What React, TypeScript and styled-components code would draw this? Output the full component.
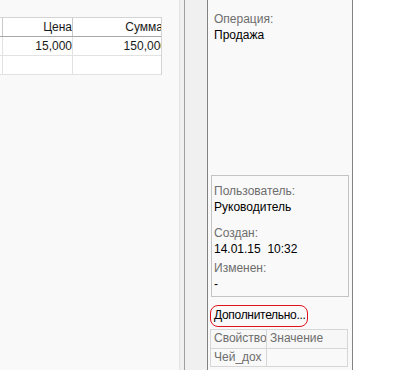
import React from "react"
import styled, {createGlobalStyle} from 'styled-components'

const Global = createGlobalStyle`
  html, body {
    margin: 0;
    padding: 0;
    background: #ffffff;
  }
  body {
    font-family: "Liberation Sans", Arial, sans-serif;
    font-size: 12px;
  }
`

const Window = styled.div`
  width: 399px;
  height: 370px;
  display: flex;
  flex-direction: row;
  overflow: hidden;
  background: #ffffff;
`
const LeftPane = styled.div`
  width: 179px;
  flex-shrink: 0;
  background: #f9f9f9;
  padding-top: 17px;
  box-sizing: border-box;
`
const Grid = styled.div`
  width: 162px;
  background: #ffffff;
  border-top: 1px solid #d4d4d4;
  border-right: 1px solid #d4d4d4;
  box-sizing: border-box;
`
const GridRow = styled.div<{header?: boolean}>`
  display: grid;
  grid-template-columns: 3px 70px 88px;
  height: 19px;
  border-bottom: 1px solid ${({header}) => header ? '#a8a8a8' : '#e2e2e2'};
  box-sizing: border-box;
`
const Cell = styled.div<{header?: boolean}>`
  border-right: 1px solid ${({header}) => header ? '#c8c8c8' : '#e2e2e2'};
  overflow: hidden;
  display: flex;
  justify-content: flex-start;
  align-items: center;
  color: #1a1a1a;
  white-space: nowrap;
  &:last-child {
    border-right: none;
  }
`
// колонка шире видимой области, текст обрезается как в гриде
const Clip = styled.span<{w: number}>`
  display: block;
  flex-shrink: 0;
  width: ${({w}) => w}px;
  text-align: right;
  padding-right: 1px;
  box-sizing: border-box;
`
const Splitter = styled.div`
  width: 6px;
  flex-shrink: 0;
  background: #f0f0f0;
  border-left: 1px solid #e3e3e3;
  border-right: 1px solid #a0a0a0;
  box-sizing: border-box;
`
const Gap = styled.div`
  width: 22px;
  flex-shrink: 0;
  background: #f0f0f0;
`
const Panel = styled.div`
  width: 146px;
  flex-shrink: 0;
  background: #f9f9f9;
  border-left: 1px solid #828282;
  border-right: 1px solid #828282;
  box-sizing: border-box;
  display: flex;
  flex-direction: column;
  padding: 11px 0 0 0;
`
const Label = styled.div<{mt?: number}>`
  color: #6d6d6d;
  line-height: 16px;
  margin-top: ${({mt}) => mt || 0}px;
`
const Value = styled.div`
  color: #000000;
  line-height: 16px;
`
const Section = styled.div`
  padding-left: 6px;
`
const InfoBox = styled.div`
  margin: 132px 3px 0 3px;
  height: 122px;
  border: 1px solid #c4c4c4;
  box-sizing: border-box;
  padding: 7px 0 0 2px;
`
const MoreLink = styled.span`
  display: inline-block;
  margin: 8px 0 0 2px;
  padding: 1px 1px 2px 3px;
  border: 1px solid #e0101a;
  border-radius: 8px;
  color: #000000;
  line-height: 17px;
  letter-spacing: -0.3px;
  align-self: flex-start;
`
const Props = styled.div`
  margin: 2px 4px 0 2px;
  border: 1px solid #d6d6d6;
  border-bottom: none;
`
const PropsRow = styled.div<{header?: boolean}>`
  display: grid;
  grid-template-columns: 56px 1fr;
  height: ${({header}) => header ? 18 : 17}px;
  border-bottom: 1px solid #d6d6d6;
  background: ${({header}) => header ? '#f7f7f7' : '#f9f9f9'};
`
const PropsCell = styled.div`
  color: #6d6d6d;
  line-height: 17px;
  padding-left: 3px;
  white-space: nowrap;
  overflow: hidden;
  border-right: 1px solid #d6d6d6;
  &:last-child {
    border-right: none;
  }
`
const Rest = styled.div`
  flex: 1;
  background: #ffffff;
`

export default function App() {
    return <>
        <Global/>
        <Window>
            <LeftPane>
                <Grid>
                    <GridRow header>
                        <Cell header/>
                        <Cell header><Clip w={70}>Цена</Clip></Cell>
                        <Cell header><Clip w={91}>Сумма</Clip></Cell>
                    </GridRow>
                    <GridRow>
                        <Cell/>
                        <Cell><Clip w={70}>15,000</Clip></Cell>
                        <Cell><Clip w={95}>150,000</Clip></Cell>
                    </GridRow>
                    <GridRow>
                        <Cell/>
                        <Cell/>
                        <Cell/>
                    </GridRow>
                </Grid>
            </LeftPane>
            <Splitter/>
            <Gap/>
            <Panel>
                <Section>
                    <Label>Операция:</Label>
                    <Value>Продажа</Value>
                </Section>
                <InfoBox>
                    <Label>Пользователь:</Label>
                    <Value>Руководитель</Value>
                    <Label mt={10}>Создан:</Label>
                    <Value>14.01.15&nbsp;&nbsp;10:32</Value>
                    <Label mt={3}>Изменен:</Label>
                    <Value>-</Value>
                </InfoBox>
                <MoreLink>Дополнительно...</MoreLink>
                <Props>
                    <PropsRow header>
                        <PropsCell>Свойство</PropsCell>
                        <PropsCell>Значение</PropsCell>
                    </PropsRow>
                    <PropsRow>
                        <PropsCell>Чей_дох</PropsCell>
                        <PropsCell/>
                    </PropsRow>
                </Props>
            </Panel>
            <Rest/>
        </Window>
    </>
}
